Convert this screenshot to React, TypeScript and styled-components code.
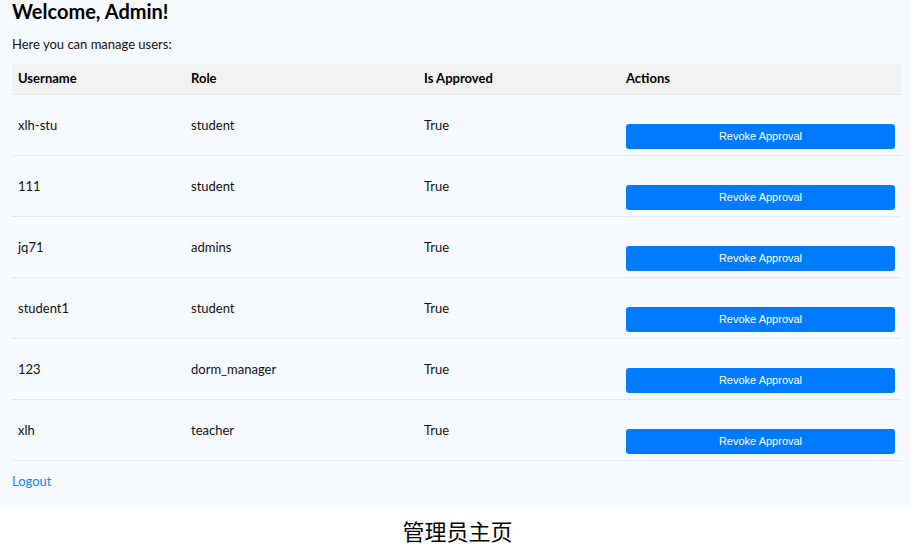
import styled, { createGlobalStyle } from "styled-components";

const GlobalStyle = createGlobalStyle`
  html, body { margin: 0; padding: 0; background: #ffffff; }
  body { font-family: Lato, "Noto Sans", sans-serif; }
`;

interface UserRow {
  username: string;
  role: string;
  approved: boolean;
}

const users: UserRow[] = [
  { username: "xlh-stu", role: "student", approved: true },
  { username: "111", role: "student", approved: true },
  { username: "jq71", role: "admins", approved: true },
  { username: "student1", role: "student", approved: true },
  { username: "123", role: "dorm_manager", approved: true },
  { username: "xlh", role: "teacher", approved: true },
];

const Shot = styled.div`
  width: 910px;
  height: 547px;
  display: flex;
  flex-direction: column;
  overflow: hidden;
`;

const Page = styled.main`
  height: 507px;
  box-sizing: border-box;
  background: #f6f9fe;
  padding: 0 9px 0 12px;
  color: #111;
`;

const Title = styled.h1`
  margin: 0;
  font-size: 20px;
  line-height: 23px;
  font-weight: 700;
  color: #000;
`;

const Intro = styled.p`
  margin: 12px 0 11px;
  font-size: 13px;
  line-height: 18px;
`;

const Table = styled.table`
  width: 889px;
  border-collapse: collapse;
  table-layout: fixed;
  font-size: 13px;
`;

const HeadCell = styled.th<{ $w: number }>`
  box-sizing: border-box;
  width: ${(p) => p.$w}px;
  text-align: left;
  background: #f2f2f2;
  padding: 6px 6px;
  height: 30px;
  line-height: 17px;
  font-weight: 700;
  color: #000;
  border-bottom: 1px solid #e4e6ea;
`;

const Row = styled.tr`
  border-bottom: 1px solid #e4e7ec;
`;

const Cell = styled.td`
  padding: 6px 6px;
  vertical-align: middle;
  line-height: 18px;
`;

const RevokeButton = styled.button`
  display: block;
  width: 100%;
  height: 25px;
  margin-top: 23px;
  border: none;
  border-radius: 3px;
  background: #007bff;
  color: #fff;
  font-family: "Liberation Sans", Arial, sans-serif;
  font-size: 11px;
  cursor: pointer;
`;

const LogoutLink = styled.a`
  display: inline-block;
  margin-top: 11px;
  font-size: 13px;
  line-height: 18px;
  color: #1a82f7;
  text-decoration: none;
`;

const Caption = styled.div`
  flex: 1;
  display: flex;
  align-items: center;
  justify-content: center;
  font-family: "Noto Sans CJK SC", sans-serif;
  font-size: 22px;
  color: #000;
  padding: 6px 0 0 5px;
`;

export default function App() {
  return (
    <>
      <GlobalStyle />
      <Shot>
        <Page>
          <Title>Welcome, Admin!</Title>
          <Intro>Here you can manage users:</Intro>
          <Table>
            <thead>
              <tr>
                <HeadCell $w={173}>Username</HeadCell>
                <HeadCell $w={233}>Role</HeadCell>
                <HeadCell $w={202}>Is Approved</HeadCell>
                <HeadCell $w={281}>Actions</HeadCell>
              </tr>
            </thead>
            <tbody>
              {users.map((u) => (
                <Row key={u.username}>
                  <Cell>{u.username}</Cell>
                  <Cell>{u.role}</Cell>
                  <Cell>{u.approved ? "True" : "False"}</Cell>
                  <Cell>
                    <RevokeButton>Revoke Approval</RevokeButton>
                  </Cell>
                </Row>
              ))}
            </tbody>
          </Table>
          <LogoutLink href="#">Logout</LogoutLink>
        </Page>
        <Caption>管理员主页</Caption>
      </Shot>
    </>
  );
}
